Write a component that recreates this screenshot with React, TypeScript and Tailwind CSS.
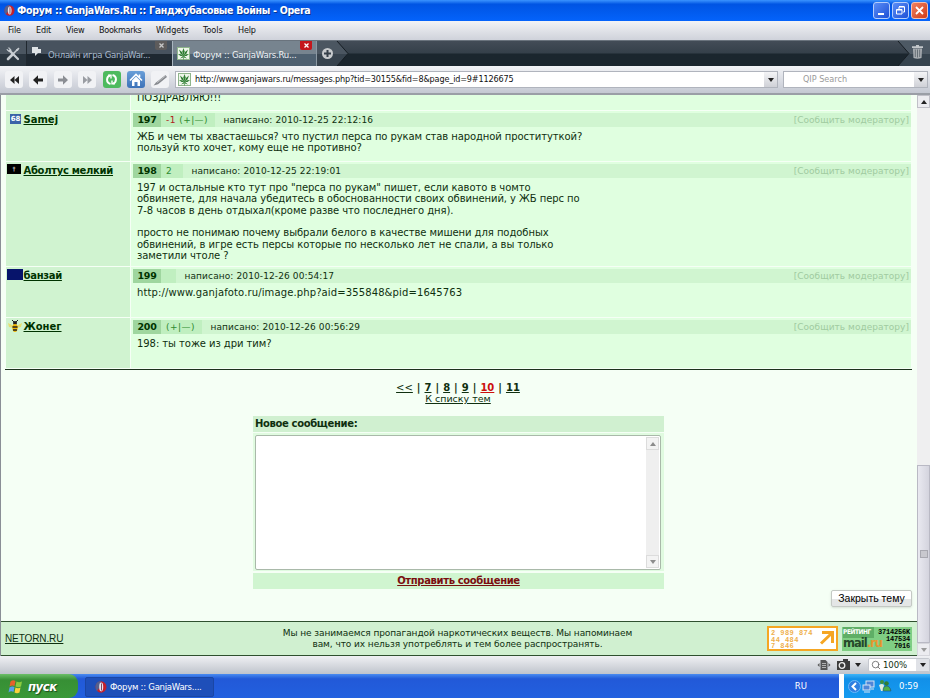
import type { ReactNode } from "react";
import { Search } from "lucide-react";

const TAHOMA = "font-['DejaVu_Sans_Condensed','DejaVu_Sans',sans-serif]";

type Post = {
  id: number;
  author: string;
  authorClass: string;
  avatar: ReactNode;
  votes: ReactNode;
  votesClass: string;
  date: string;
  rowHeight: string;
  textClass: string;
  lines: string[];
};

function BeeIcon() {
  return (
    <svg width="16" height="14" viewBox="0 0 16 14">
      <path d="M7 6 1 3l1 4 5 1zM9 6l6-3-1 4-5 1z" fill="#e8e070" />
      <circle cx="8" cy="3" r="2" fill="#222" />
      <path d="M5 0l2 2M11 0 9 2" stroke="#222" />
      <ellipse cx="8" cy="8" rx="2.6" ry="4" fill="#f0b400" />
      <path d="M5.500 7h5M6 10h4" stroke="#222" strokeWidth="1.4" />
    </svg>
  );
}

const posts: Post[] = [
  {
    id: 197,
    author: "Samej",
    authorClass: "tracking-normal",
    avatar: (
      <span className="ml-[3px] mt-px flex h-[10px] w-[11px] items-center justify-center bg-[#3b62a8] text-[7px] font-bold leading-none text-white">
        68
      </span>
    ),
    votes: (
      <>
        <span className="text-[#b02020]">-1</span> (+|—)
      </>
    ),
    votesClass: "w-[54px] tracking-[0.45px]",
    date: "2010-12-25 22:12:16",
    rowHeight: "h-[50px]",
    textClass: "tracking-[-0.085px]",
    lines: [
      "ЖБ и чем ты хвастаешься? что пустил перса по рукам став народной проституткой?",
      "пользуй кто хочет, кому еще не противно?",
    ],
  },
  {
    id: 198,
    author: "Аболтус мелкий",
    authorClass: "tracking-[-0.3px]",
    avatar: (
      <span className="flex h-[10px] w-[14px] items-center justify-center bg-black text-[6px] leading-none text-white">
        †
      </span>
    ),
    votes: "2",
    votesClass: "w-[22px]",
    date: "2010-12-25 22:19:01",
    rowHeight: "h-[104px]",
    textClass: "tracking-[-0.06px]",
    lines: [
      '197 и остальные кто тут про "перса по рукам" пишет, если кавото в чомто',
      "обвиняете, для начала убедитесь в обоснованности своих обвинений, у ЖБ перс по",
      "7-8 часов в день отдыхал(кроме разве что последнего дня).",
      "",
      "просто не понимаю почему выбрали белого в качестве мишени для подобных",
      "обвинений, в игре есть персы которые по несколько лет не спали, а вы только",
      "заметили чтоле ?",
    ],
  },
  {
    id: 199,
    author: "банзай",
    authorClass: "tracking-[-0.3px]",
    avatar: <span className="block h-[11px] w-[16px] bg-[#07146b]" />,
    votes: "",
    votesClass: "w-[15px]",
    date: "2010-12-26 00:54:17",
    rowHeight: "h-[50px]",
    textClass: "tracking-[0.125px]",
    lines: ["http://www.ganjafoto.ru/image.php?aid=355848&pid=1645763"],
  },
  {
    id: 200,
    author: "Жонег",
    authorClass: "tracking-normal",
    avatar: <BeeIcon />,
    votes: "(+|—)",
    votesClass: "w-[41px] tracking-[0.45px]",
    date: "2010-12-26 00:56:29",
    rowHeight: "h-[50px]",
    textClass: "tracking-[-0.06px]",
    lines: ["198: ты тоже из дри тим?"],
  },
];

function OperaIcon({ size }: { size: number }) {
  return (
    <svg width={size} height={size} viewBox="0 0 12 12" className="shrink-0">
      <ellipse cx="6" cy="6" rx="5.5" ry="5.8" fill="#c3202c" />
      <path d="M6 .3C2 .3.6 3 .6 6c0 1.500.4 3 1.400 4L5 6z" fill="#56608c" />
      <ellipse cx="6.200" cy="6" rx="2" ry="4.400" fill="#e9e4ee" />
      <path d="M6.500 2.500v7" stroke="#7b4a64" strokeWidth="1" />
    </svg>
  );
}

function LeafIcon() {
  return (
    <svg width="13" height="13" viewBox="0 0 13 13" className="shrink-0">
      <rect width="13" height="13" fill="#eef6ea" />
      <rect x=".5" y=".5" width="12" height="12" fill="none" stroke="#8fb58c" />
      <g fill="#2e7d32">
        <path d="M6.500 1 7.700 4.500 6.500 9 5.300 4.500z" />
        <path d="M2 2.500 5 5l1.500 4L3.500 6.500zM11 2.500 8 5 6.500 9l3-2.500z" />
        <path d="M1 7l3 .2L6.500 9 3.500 9zM12 7l-3 .2L6.500 9l3 0z" />
        <path d="M6.500 8.500 3 11.500l3-1zM6.500 8.500l3.500 3-3-1z" />
        <path d="M6.200 8h.6v4.500h-.6z" />
      </g>
    </svg>
  );
}

function Triangle({ up = false, color = "#222" }: { up?: boolean; color?: string }) {
  return (
    <svg width="6" height="4" viewBox="0 0 6 4" className="shrink-0">
      <path d={up ? "M0 4 3 0l3 4z" : "M0 0h6L3 4z"} fill={color} />
    </svg>
  );
}

function TitleBar() {
  return (
    <div className="flex h-[21px] items-center bg-linear-to-b from-[#3a93ff] via-[#0054e3] via-20% to-[#0463fb] pl-[4px] pr-[2px]">
      <OperaIcon size={11} />
      <span className="ml-[2px] flex-1 whitespace-nowrap font-['DejaVu_Sans_Condensed',sans-serif] text-[10.500px] font-bold leading-none tracking-[-0.3px] text-white [text-shadow:1px_1px_0_#0a3590]">
        Форум :: GanjaWars.Ru :: Ганджубасовые Войны - Opera
      </span>
      <div className="flex gap-[2px]">
        <span className="flex h-[17px] w-[17px] items-end rounded-[3px] border border-[#b4cdfb] bg-linear-to-br from-[#5b8df6] to-[#1e4fd6] pb-[3px] pl-[4px]">
          <span className="h-[2px] w-[6px] bg-white" />
        </span>
        <span className="flex h-[17px] w-[17px] items-center justify-center rounded-[3px] border border-[#b4cdfb] bg-linear-to-br from-[#5b8df6] to-[#1e4fd6]">
          <svg width="11" height="11" viewBox="0 0 11 11" fill="none" stroke="#fff">
            <path d="M4 4V2h5.500v5H8M4 1.500h5.500" />
            <path d="M1.500 4.500h5.500v4.500H1.500zM1.500 5h5.500" />
          </svg>
        </span>
        <span className="flex h-[17px] w-[17px] items-center justify-center rounded-[3px] border border-[#f5c0b0] bg-linear-to-br from-[#f08060] to-[#cf3a12]">
          <svg width="9" height="9" viewBox="0 0 9 9" stroke="#fff" strokeWidth="1.800">
            <path d="M1 1l7 7M8 1 1 8" />
          </svg>
        </span>
      </div>
    </div>
  );
}

function MenuBar() {
  return (
    <div className={`flex h-[19px] items-center bg-linear-to-b from-[#f2f3f6] to-[#cfd2da] pl-[8px] text-[9px] leading-none tracking-[-0.15px] text-[#111] ${TAHOMA}`}>
      <span className="w-[28px]">File</span>
      <span className="w-[30px]">Edit</span>
      <span className="w-[33px]">View</span>
      <span className="w-[57px] tracking-[-0.3px]">Bookmarks</span>
      <span className="w-[47px] tracking-normal">Widgets</span>
      <span className="w-[35px] tracking-normal">Tools</span>
      <span>Help</span>
    </div>
  );
}

function ToolsIcon() {
  return (
    <svg width="14" height="14" viewBox="0 0 14 14" fill="none" stroke="#c9ced3">
      <path d="M3.500 3.500 12 12" strokeWidth="2.200" strokeLinecap="round" />
      <path d="M1 2.200 2.800 4 4.200 2.600 2.400.8A3 3 0 0 1 5 4.500 3 3 0 0 1 1 2.200z" fill="#c9ced3" strokeWidth=".8" />
      <path d="M2 12 7 7" strokeWidth="2.600" strokeLinecap="round" />
      <path d="M7 7l4.500-4.500" strokeWidth="1.600" />
      <path d="M10.500 2.500 13 1l-1.300 2.600z" fill="#c9ced3" />
    </svg>
  );
}

function TrashIcon() {
  return (
    <svg width="11" height="14" viewBox="0 0 11 14">
      <path d="M4 0h3v1.200h4V3H0V1.200h4z" fill="#c3c7ca" />
      <path d="M1 3.500h9L9.500 13q-4 1.500-8 0z" fill="#a9aeb2" />
      <path d="M3.300 4.500v7.500M5.500 4.500V12.500M7.700 4.500V12" stroke="#5f6970" strokeWidth=".9" />
    </svg>
  );
}

function TabBar() {
  return (
    <div className={`flex h-[26px] border-t border-[#6a737d] bg-linear-to-b from-[#434c57] from-0% via-[#35404a] via-48% to-[#1b262e] to-52% text-[9.500px] ${TAHOMA}`}>
      <div className="flex w-[27px] items-center justify-center border-r border-[#20282f] bg-linear-to-b from-[#4b5661] from-50% to-[#2b3640] to-50%">
        <ToolsIcon />
      </div>
      <div className="flex w-[146px] border-r border-[#aab6c0] bg-linear-to-b from-[#47525e] from-50% to-[#1e2831] to-50%">
        <svg width="10" height="10" viewBox="0 0 10 10" className="ml-[5px] mt-[6px] shrink-0">
          <path d="M0 0h6v2h3v4H6L3 9V6H0z" fill="#dfe3e6" />
        </svg>
        <span className="ml-[6px] mt-[7px] w-[107px] whitespace-nowrap leading-[13px] tracking-[-0.3px] text-[#a9b9cc]">
          Онлайн игра GanjaWar...
        </span>
        <CloseTab className="bg-[#5d5b5b] text-[#c8c8c8]" />
      </div>
      <div className="flex w-[144px] border-r border-[#8b98a3] bg-linear-to-b from-[#77848f] from-50% to-[#4e6070] to-50%">
        <div className="ml-[4px] mt-[6px]">
          <LeafIcon />
        </div>
        <span className="ml-[3px] mt-[7px] w-[107px] whitespace-nowrap leading-[13px] tracking-[-0.2px] text-[#eef2f5]">
          Форум :: GanjaWars.Ru...
        </span>
        <CloseTab className="bg-[#c4161c] text-white" />
      </div>
      <svg width="34" height="25" viewBox="0 0 34 25">
        <path d="M0 0h20l11 12.500L20 25H0z" fill="#4b5661" />
        <path d="M0 13h30.500L20 25H0z" fill="#37434e" />
        <path d="M20 0l11 12.500L20 25" fill="none" stroke="#161d23" />
        <circle cx="10.500" cy="12.500" r="5.500" fill="#c8cbce" />
        <path d="M7 12.500h7M10.500 9v7" stroke="#36404a" strokeWidth="2" />
      </svg>
      <svg width="14" height="25" viewBox="0 0 14 25" className="ml-auto">
        <path d="M1 0l11 12.500L1 25h13V0z" fill="#4d5964" />
        <path d="M12 13 1 25h13V13z" fill="#36434e" />
        <path d="M1 0l11 12.500L1 25" fill="none" stroke="#161d23" />
      </svg>
      <div className="flex w-[19px] items-center bg-linear-to-b from-[#4d5964] from-50% to-[#36434e] to-50% pb-[3px] pl-px">
        <TrashIcon />
      </div>
    </div>
  );
}

function CloseTab({ className }: { className: string }) {
  return (
    <span className={`flex h-[9px] w-[12px] shrink-0 items-center justify-center rounded-b-[2px] ${className}`}>
      <svg width="5" height="5" viewBox="0 0 5 5" stroke="currentColor" strokeWidth="1.300">
        <path d="M.5.5l4 4M4.500.5l-4 4" />
      </svg>
    </span>
  );
}

function ToolButton({ children, className = "bg-[#f1f2f5]" }: { children: ReactNode; className?: string }) {
  return (
    <span className={`flex h-[17px] w-[18px] items-center justify-center rounded-[3px] ${className}`}>
      {children}
    </span>
  );
}

function AddressBar() {
  return (
    <div className="flex h-[29px] items-center border-b-2 border-[#9a9ea6] bg-linear-to-b from-[#f3f4f7] to-[#c4c8d2] pl-[5px] pr-[2px]">
      <div className="flex w-[170px] gap-[6.400px]">
        <ToolButton>
          <svg width="9" height="8" viewBox="0 0 9 8" fill="#222">
            <path d="M4.500 0v8L0 4zM9 0v8L4.500 4z" />
          </svg>
        </ToolButton>
        <ToolButton>
          <svg width="10" height="10" viewBox="0 0 10 10" fill="#222">
            <path d="M0 5 5 .3v3.200h5v3H5v3.200z" />
          </svg>
        </ToolButton>
        <ToolButton>
          <svg width="10" height="10" viewBox="0 0 10 10" fill="#8b8e94">
            <path d="M10 5 5 .3v3.200H0v3h5v3.200z" />
          </svg>
        </ToolButton>
        <ToolButton>
          <svg width="9" height="8" viewBox="0 0 9 8" fill="#9a9da3">
            <path d="M0 0v8l4.500-4zM4.500 0v8L9 4z" />
          </svg>
        </ToolButton>
        <ToolButton className="bg-[#4dba5e]">
          <svg width="13" height="13" viewBox="0 0 13 13" fill="none" stroke="#fff" strokeWidth="2">
            <path d="M5.500 11C.5 9.500 1.500 3.500 5 2.500M7.500 2C12.500 3.500 11.500 9.500 8 10.500" />
            <path d="M3 2.200h3v3.300M10 10.800H7V7.500" strokeWidth="1.400" />
          </svg>
        </ToolButton>
        <ToolButton className="bg-linear-to-b from-[#6a9fd8] to-[#3d72b8]">
          <svg width="14" height="14" viewBox="0 0 14 14">
            <path d="M1 7.500 7 1.500l6 6M10.500 4V1.500" fill="none" stroke="#fff" strokeWidth="1.600" />
            <path d="M3 7.500 7 3.500l4 4V13H8.500V9h-3v4H3z" fill="#fff" />
          </svg>
        </ToolButton>
        <ToolButton>
          <svg width="15" height="12" viewBox="0 0 15 12">
            <path d="M.5 11.500 3 8.500 12.500 1l1.500 2L5 10.300z" fill="#85888d" />
            <path d="M4 8.700 12.700 1.800" stroke="#c4c6c9" strokeWidth=".8" />
          </svg>
        </ToolButton>
      </div>
      <div className="flex h-[17px] w-[603px] items-center border border-[#b0b4bd] bg-white pl-[2px]">
        <LeafIcon />
        <span className={`ml-[4px] flex-1 whitespace-nowrap text-[9px] leading-none tracking-[-0.15px] text-[#111] ${TAHOMA}`}>
          http://www.ganjawars.ru/messages.php?tid=30155&fid=8&page_id=9#1126675
        </span>
        <span className="flex h-full w-[13px] items-center justify-center bg-linear-to-b from-[#f4f4f6] to-[#cfd1d7]">
          <Triangle />
        </span>
      </div>
      <div className="ml-[5px] flex h-[17px] flex-1 items-center border border-[#b0b4bd] bg-white">
        <span className={`flex-1 pl-[19px] text-[9px] leading-none text-[#9a9a9a] ${TAHOMA}`}>QIP Search</span>
        <span className="flex h-full w-[13px] items-center justify-center bg-linear-to-b from-[#f4f4f6] to-[#cfd1d7]">
          <Triangle />
        </span>
      </div>
    </div>
  );
}

function PostRow({ post }: { post: Post }) {
  return (
    <div className={`flex ${post.rowHeight}`}>
      <div className="flex w-[124px] bg-[#d0f3d0] pl-px pt-[2px]">
        <div className="w-[16.500px] shrink-0">{post.avatar}</div>
        <a className={`whitespace-nowrap text-[10px] font-bold leading-[14px] text-[#003300] underline ${post.authorClass}`}>
          {post.author}
        </a>
      </div>
      <div className="ml-px flex-1 bg-[#e0ffe0] pl-[2px] pt-[2px]">
        <div className="flex h-[14px] items-center bg-[#d0f5d0] text-[9px] leading-none">
          <span className="flex h-full w-[28px] items-center justify-center bg-[#9fd69f] text-[9.500px] font-bold tracking-[-0.3px] text-[#003300]">
            {post.id}
          </span>
          <span className={`flex h-full items-center whitespace-pre bg-[#c0efc0] pl-[5px] text-[#2f8a2f] ${post.votesClass}`}>
            <span>{post.votes}</span>
          </span>
          <span className="ml-[8.500px] flex-1 whitespace-nowrap tracking-[0.11px]">написано: {post.date}</span>
          <span className="mr-[2px] tracking-[0.030px] text-[#a0cba0]">[Сообщить модератору]</span>
        </div>
        <div className={`whitespace-nowrap pl-[4px] pt-[4px] text-[10px] leading-[11.350px] ${post.textClass}`}>
          {post.lines.map((line, i) => (
            <p key={i} className="h-[11.350px]">
              {line}
            </p>
          ))}
        </div>
      </div>
    </div>
  );
}

function Pagination() {
  return (
    <div className="mr-[2px] mt-[12px] text-center leading-[11px]">
      <p className="flex justify-center gap-[4px] text-[10px] font-bold">
        <a className="font-normal underline">&lt;&lt;</a>
        <span>|</span>
        <a className="underline">7</a>
        <span>|</span>
        <a className="underline">8</a>
        <span>|</span>
        <a className="underline">9</a>
        <span>|</span>
        <a className="text-[#cc1010] underline">10</a>
        <span>|</span>
        <a className="underline">11</a>
      </p>
      <a className="block text-[9.500px] underline">К списку тем</a>
    </div>
  );
}

function MessageForm() {
  return (
    <div className="ml-[252px] mt-[12px] w-[411px] text-[10px] font-bold tracking-[-0.35px]">
      <div className="h-[16px] bg-[#d0f0d0] pl-[2px] leading-[16px]">Новое сообщение:</div>
      <div className="mt-px h-[138px] bg-[#e0fbe0] px-[2px] py-[2px]">
        <div className="flex h-[135px] w-[406px] justify-end rounded-[2px] border border-[#a9b9a9] bg-white p-px">
          <div className="flex w-[13px] flex-col justify-between bg-[#efefef]">
            <span className="flex h-[13px] items-center justify-center border border-[#dcdcdc] bg-[#f3f3f3]">
              <Triangle up color="#8c8c8c" />
            </span>
            <span className="flex h-[13px] items-center justify-center border border-[#dcdcdc] bg-[#f3f3f3]">
              <Triangle color="#8c8c8c" />
            </span>
          </div>
        </div>
      </div>
      <div className="mt-[2px] h-[16px] bg-[#d0f5d0] text-center leading-[16px]">
        <a className="text-[#7a0f0f] underline">Отправить сообщение</a>
      </div>
    </div>
  );
}

function Footer() {
  return (
    <div className="flex h-[35px] items-center border-y-[1.500px] border-[#2f502f] bg-[#d0f0d0] pl-[4px] pr-[5px]">
      <a className="w-[240px] font-['Liberation_Sans',sans-serif] text-[10px] tracking-[-0.1px] underline">NETORN.RU</a>
      <p className="w-[425px] text-center text-[9px] leading-[10.700px] tracking-[-0.075px]">
        Мы не занимаемся пропагандой наркотических веществ. Мы напоминаем
        <br />
        вам, что их нельзя употреблять и тем более распространять.
      </p>
      <div className="ml-auto flex items-center gap-[4px]">
        <div className="flex h-[25px] w-[71px] justify-between border-2 border-[#f5a623] bg-white py-[2px] pl-[2px] pr-px">
          <p className="whitespace-nowrap font-['Liberation_Mono',monospace] text-[7px] font-bold leading-[6.500px] tracking-[0.45px] text-[#eeb04c]">
            2 989 874
            <br />
            44 484
            <br />7 846
          </p>
          <svg width="16" height="16" viewBox="0 0 16 16" fill="none" stroke="#f5a623" strokeWidth="3" className="shrink-0">
            <path d="M3 2.500h10.500V13M13 3 2 13.500" />
          </svg>
        </div>
        <div className="flex h-[24px] w-[70px] justify-between bg-[#7fce83] pl-px pr-[2px] font-bold">
          <div className="w-[31px] whitespace-nowrap">
            <p className="bg-[#5fae66] font-['DejaVu_Sans_Condensed',sans-serif] text-[6.500px] leading-[11px] tracking-[-0.4px] text-white">
              РЕЙТИНГ
            </p>
            <p className="text-[11.500px] leading-[11px] tracking-[-1px] text-[#26482a]">
              mail<span className="text-[#e8962c]">.ru</span>
            </p>
          </div>
          <p className="whitespace-nowrap pt-[2px] text-right font-['Liberation_Mono',monospace] text-[7px] leading-[7px] tracking-[-0.2px] text-black">
            3714256K
            <br />
            147534
            <br />
            7016
          </p>
        </div>
      </div>
    </div>
  );
}

function PageScrollbar() {
  return (
    <div className="flex w-[13px] flex-col bg-[#efeff0]">
      <span className="flex h-[13px] items-center justify-center border border-[#c0c0c8] bg-[#ececf0]">
        <Triangle up />
      </span>
      <div className="flex-1" />
      <div className="flex h-[178px] items-center justify-center border border-[#b9b9c4] bg-linear-to-r from-[#e9e9f0] to-[#d4d4de]">
        <span className="h-[8px] w-[8px] border border-[#a8a8b0] bg-[#c8c8ce]" />
      </div>
      <span className="flex h-[13px] items-center justify-center border border-[#d6d6dc] bg-[#ececf0]">
        <Triangle color="#9a9a9a" />
      </span>
    </div>
  );
}

function StatusBar() {
  return (
    <div className="flex h-[18px] items-center justify-end bg-linear-to-b from-[#f0f1f4] to-[#bfc4cc]">
      <svg width="14" height="12" viewBox="0 0 14 12">
        <path d="M3.500 1h5l2 2v8h-7z" fill="#555" />
        <path d="M5 4.500h4M5 6.500h4M5 8.500h4" stroke="#ccc" strokeWidth=".8" />
        <path d="M2.500 4v4L.5 6zM11.500 4v4l2-2z" fill="#555" />
      </svg>
      <svg width="14" height="12" viewBox="0 0 14 12" className="ml-[6px]">
        <path d="M0 2h6V0h5v2h2v9H0z" fill="#3c3c3c" />
        <circle cx="5" cy="6.500" r="2.800" fill="#3c3c3c" stroke="#eee" strokeWidth="1.300" />
      </svg>
      <div className="ml-[4px] mr-[7px]">
        <Triangle />
      </div>
      <div className={`flex h-[14px] w-[62px] items-center rounded-[2px] border border-[#c5c8cf] bg-white pl-[2px] text-[9.500px] leading-none ${TAHOMA}`}>
        <Search size={10} color="#666" />
        <span className="ml-[2px] flex-1 tracking-[-0.1px]">100%</span>
        <span className="flex h-full w-[13px] items-center justify-center bg-[#e0e2e7]">
          <Triangle />
        </span>
      </div>
    </div>
  );
}

function Taskbar() {
  return (
    <div className={`flex h-[24px] bg-linear-to-b from-[#4a8bf0] via-[#2259d8] via-20% to-[#2260df] text-white ${TAHOMA}`}>
      <div className="flex w-[78px] items-center rounded-r-[9px] bg-linear-to-b from-[#6cbf68] via-[#378f35] via-25% to-[#3a9838] pl-[8px]">
        <svg width="15" height="15" viewBox="0 0 15 15">
          <path d="M2.500 2.500q2.500-2 5-.5l-1 5q-2.500-1-5 .5z" fill="#e8602c" />
          <path d="M8.500 2.500q2.500 1.500 5.500 0l-1 5q-2.500 1.500-5.500 0z" fill="#8ccb3f" />
          <path d="M1.500 8.500q2.500-1.500 5-.5l-1 5q-2.500-1.500-5 .5z" fill="#5a9cf0" />
          <path d="M7.500 8.500q2.500 1.500 5 0l-1 5q-2.500 1.500-5 0z" fill="#fbd23c" />
        </svg>
        <span className="ml-[5px] text-[13px] font-bold italic leading-none tracking-[-0.5px] [text-shadow:1px_1px_1px_#1c4a1c]">
          пуск
        </span>
      </div>
      <div className="ml-[7px] mt-[3px] flex h-[20px] w-[129px] items-center rounded-[2px] border border-[#1a46a5] bg-[#1e4fb9] pl-[9px] text-[9.500px]">
        <OperaIcon size={12} />
        <span className="ml-[3px] whitespace-nowrap leading-none tracking-[-0.27px]">Форум :: GanjaWars....</span>
      </div>
      <span className="ml-auto mr-[32px] self-center text-[9.500px] leading-none">RU</span>
      <span className="w-[5px] bg-white" />
      <div className="flex w-[86px] items-center bg-linear-to-b from-[#3cb4f8] via-[#1290e8] via-20% to-[#159af0] pl-[4px]">
        <svg width="13" height="15" viewBox="0 0 13 15">
          <circle cx="6.500" cy="7.500" r="6" fill="#2f7fe0" stroke="#6bb8f8" />
          <path d="M8 4 4.500 7.500 8 11" fill="none" stroke="#fff" strokeWidth="2" />
        </svg>
        <svg width="13" height="13" viewBox="0 0 13 13" className="ml-px">
          <rect x="4" y="1" width="8" height="6" fill="#4f86d8" stroke="#d8e4f4" />
          <rect x="1" y="5" width="7" height="5" fill="#4f86d8" stroke="#d8e4f4" />
          <path d="M2 12h6M9 9h3" stroke="#d8e4f4" />
        </svg>
        <svg width="14" height="14" viewBox="0 0 14 14" className="ml-[3px]">
          <circle cx="4" cy="3" r="2" fill="#3f8f3f" />
          <path d="M1 6q3-2 5 0l-1 6H3z" fill="#dfeedd" />
          <circle cx="8.500" cy="4.500" r="2.300" fill="#2f7f35" />
          <path d="M5 12q0-5 3.500-5t4.500 5z" fill="#4fb04a" stroke="#204c80" strokeWidth=".6" />
        </svg>
        <span className="ml-[7px] text-[9.500px] leading-none">0:59</span>
      </div>
    </div>
  );
}

export default function App() {
  return (
    <main className="flex h-[698px] w-[930px] flex-col overflow-hidden font-['DejaVu_Sans',sans-serif] text-[#0f2f0f]">
      <TitleBar />
      <MenuBar />
      <TabBar />
      <AddressBar />
      <div className="flex h-[561px]">
        <div className="flex w-[917px] flex-col border-l border-[#8a8f96] bg-[#f5fff5]">
          <div className="ml-[4px] flex w-[907px] flex-col gap-px border-b-[1.500px] border-[#1d331d] px-px pb-px">
            <div className="flex h-[15px] overflow-hidden">
              <div className="w-[124px] bg-[#d0f3d0]" />
              <div className="ml-px flex-1 bg-[#e0ffe0] pl-[6px]">
                <p className="-mt-[3px] text-[10px] leading-[11.350px] tracking-[-0.2px]">ПОЗДРАВЛЯЮ!!!</p>
              </div>
            </div>
            {posts.map((post) => (
              <PostRow key={post.id} post={post} />
            ))}
          </div>
          <Pagination />
          <MessageForm />
          <div className="flex flex-1 justify-end pr-[5px]">
            <button className="mt-px h-[17px] w-[81px] rounded-[2px] border border-[#c4c9c4] bg-linear-to-b from-white from-50% to-[#e4e6e6] to-50% font-['Liberation_Sans',sans-serif] text-[10.500px] leading-none text-black shadow-sm">
              Закрыть тему
            </button>
          </div>
          <Footer />
        </div>
        <PageScrollbar />
      </div>
      <StatusBar />
      <Taskbar />
    </main>
  );
}
